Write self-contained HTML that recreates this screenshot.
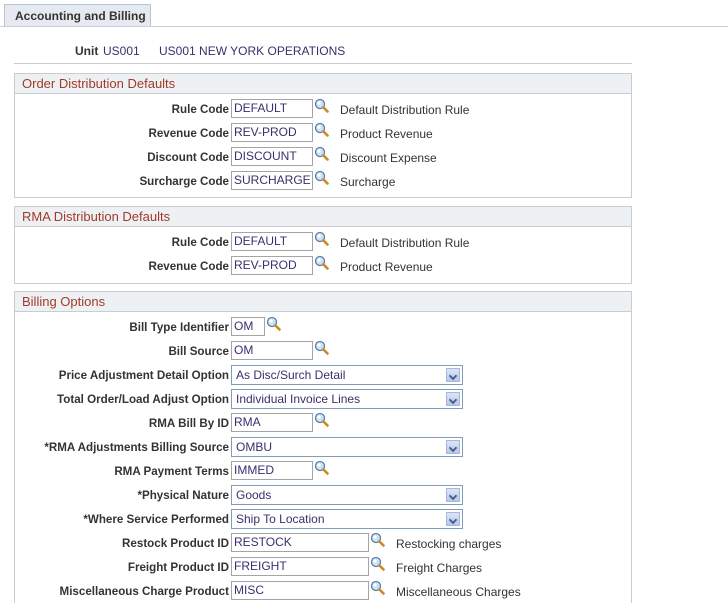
<!DOCTYPE html>
<html style="overflow:hidden;height:603px"><head><style>
html,body{margin:0;width:728px;height:603px;overflow:hidden}
body{background:#fff;font-family:"Liberation Sans",Arial,sans-serif;font-size:12px;color:#333;position:relative}
.a{position:absolute}
.tab{left:4px;top:4px;width:145px;height:22px;background:#e4eaf0;border:1px solid #b8c4d0;border-bottom:none;font-weight:bold;font-size:12px;line-height:22px;text-indent:10px;color:#333}
.tl{left:0;top:26px;width:728px;height:1px;background:#c8d0d8}
.box{left:14px;width:616px;border:1px solid #c9cdd1}
.hd{height:19px;background:#eef1f3;border-bottom:1px solid #c9cdd1;color:#a23a2a;font-size:13px;line-height:19px;text-indent:7px}
.lb{font-weight:bold;text-align:right;width:229px;left:0;white-space:nowrap;font-size:11.6px}
.in{height:17px;border:1px solid #a5a5a5;background:#fff;color:#3a2f6e;line-height:17px;text-indent:2px;font-size:12px;box-sizing:content-box;overflow:hidden;white-space:nowrap}
.sel{height:18px;border:1px solid #7f9db9;background:#fff;color:#3a2f6e;line-height:18px;text-indent:4px;width:230px}
.sel:after{content:"";position:absolute;right:2px;top:2px;width:14px;height:14px;background:linear-gradient(#dbe5f7,#b5c9ee);border:1px solid #a5b9de;box-sizing:border-box}
.sel:before{content:"";position:absolute;right:6px;top:7px;width:4px;height:4px;border-right:2px solid #4d6185;border-bottom:2px solid #4d6185;transform:rotate(45deg);z-index:2}
.ds{color:#333}
</style></head><body>
<div class="a tab">Accounting and Billing</div>
<div class="a tl"></div>
<div class="a" style="left:75px;top:44px;font-weight:bold">Unit</div>
<div class="a" style="left:103px;top:44px;color:#3a2f6e">US001</div>
<div class="a" style="left:159px;top:44px;color:#3a2f6e">US001 NEW YORK OPERATIONS</div>
<div class="a" style="left:14px;top:63px;width:618px;height:1px;background:#c9cdd1"></div>

<div class="a box" style="top:73px;height:123px"><div class="hd">Order Distribution Defaults</div></div>
<div class="a box" style="top:206px;height:76px"><div class="hd">RMA Distribution Defaults</div></div>
<div class="a box" style="top:291px;height:320px"><div class="hd">Billing Options</div></div>

<svg width="0" height="0" style="position:absolute"><defs><symbol id="mg" viewBox="0 0 15 15"><circle cx="6" cy="6" r="4.5" fill="#cfe3f7" stroke="#5a7fa8" stroke-width="1.3"/><circle cx="5" cy="5" r="1.6" fill="#fff"/><path d="M9.3 9.3L13.5 13.5" stroke="#c98a2d" stroke-width="2.6" stroke-linecap="round"/></symbol></defs></svg>

<div id="rows"></div>
<script>
var R=[
[100,"Rule Code","DEFAULT",80,"Default Distribution Rule"],
[124,"Revenue Code","REV-PROD",80,"Product Revenue"],
[148,"Discount Code","DISCOUNT",80,"Discount Expense"],
[172,"Surcharge Code","SURCHARGE",80,"Surcharge"],
[233,"Rule Code","DEFAULT",80,"Default Distribution Rule"],
[257,"Revenue Code","REV-PROD",80,"Product Revenue"],
[318,"Bill Type Identifier","OM",32,""],
[342,"Bill Source","OM",80,""],
[366,"Price Adjustment Detail Option","As Disc/Surch Detail",-1],
[390,"Total Order/Load Adjust Option","Individual Invoice Lines",-1],
[414,"RMA Bill By ID","RMA",80,""],
[438,"*RMA Adjustments Billing Source","OMBU",-1],
[462,"RMA Payment Terms","IMMED",80,""],
[486,"*Physical Nature","Goods",-1],
[510,"*Where Service Performed","Ship To Location",-1],
[534,"Restock Product ID","RESTOCK",136,"Restocking charges"],
[558,"Freight Product ID","FREIGHT",136,"Freight Charges"],
[582,"Miscellaneous Charge Product","MISC",136,"Miscellaneous Charges"]];
var h="";
R.forEach(function(r){var t=r[0];
h+='<div class="a lb" style="top:'+(t+3)+'px">'+r[1]+'</div>';
if(r[3]<0){h+='<div class="a sel" style="left:231px;top:'+(t-1)+'px">'+r[2]+'</div>';}
else{h+='<div class="a in" style="left:231px;top:'+(t-1)+'px;width:'+r[3]+'px">'+r[2]+'</div>';
var ix=231+r[3]+3;
h+='<svg class="a" style="left:'+ix+'px;top:'+(t-2)+'px" width="15" height="15"><use href="#mg"/></svg>';
if(r[4])h+='<div class="a ds" style="left:'+(ix+26)+'px;top:'+(t+3)+'px">'+r[4]+'</div>';}
});
document.getElementById("rows").innerHTML=h;
</script>
</body></html>
